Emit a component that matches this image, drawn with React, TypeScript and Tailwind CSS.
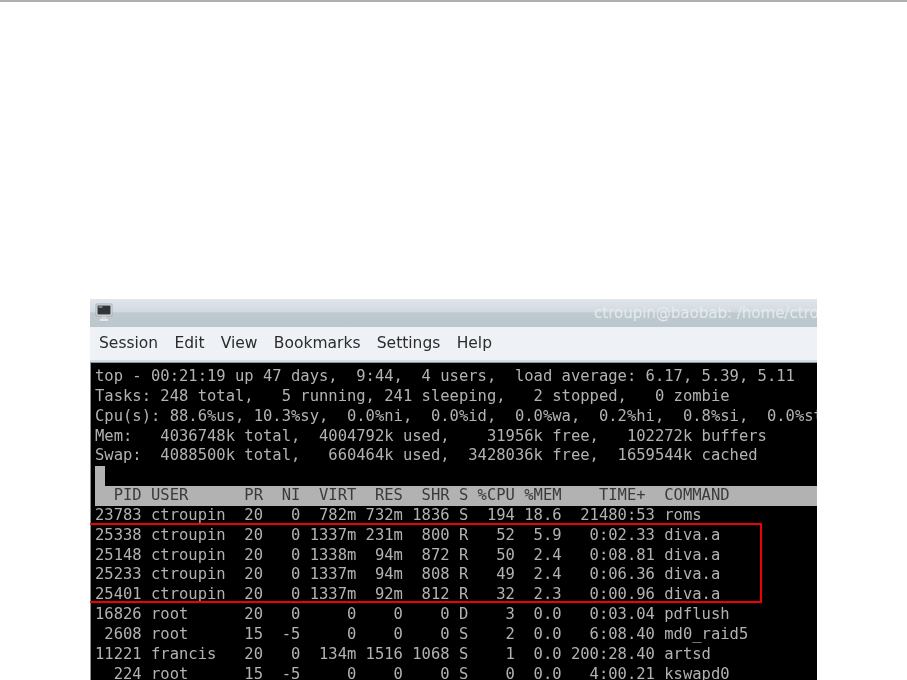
// Screenshot of a Konsole window running top, with a red box around the diva.a rows

const menuItems = ["Session", "Edit", "View", "Bookmarks", "Settings", "Help"]

const summaryLines = [
    "top - 00:21:19 up 47 days,  9:44,  4 users,  load average: 6.17, 5.39, 5.11",
    "Tasks: 248 total,   5 running, 241 sleeping,   2 stopped,   0 zombie",
    "Cpu(s): 88.6%us, 10.3%sy,  0.0%ni,  0.0%id,  0.0%wa,  0.2%hi,  0.8%si,  0.0%st",
    "Mem:   4036748k total,  4004792k used,    31956k free,   102272k buffers",
    "Swap:  4088500k total,   660464k used,  3428036k free,  1659544k cached",
]

const header = "  PID USER      PR  NI  VIRT  RES  SHR S %CPU %MEM    TIME+  COMMAND"

const processLines = [
    "23783 ctroupin  20   0  782m 732m 1836 S  194 18.6  21480:53 roms",
    "25338 ctroupin  20   0 1337m 231m  800 R   52  5.9   0:02.33 diva.a",
    "25148 ctroupin  20   0 1338m  94m  872 R   50  2.4   0:08.81 diva.a",
    "25233 ctroupin  20   0 1337m  94m  808 R   49  2.4   0:06.36 diva.a",
    "25401 ctroupin  20   0 1337m  92m  812 R   32  2.3   0:00.96 diva.a",
    "16826 root      20   0     0    0    0 D    3  0.0   0:03.04 pdflush",
    " 2608 root      15  -5     0    0    0 S    2  0.0   6:08.40 md0_raid5",
    "11221 francis   20   0  134m 1516 1068 S    1  0.0 200:28.40 artsd",
    "  224 root      15  -5     0    0    0 S    0  0.0   4:00.21 kswapd0",
]

function TerminalIcon() {
    return (
        <svg width="18" height="20" viewBox="0 0 18 20" className="ml-[5px]">
            <rect x="1" y="1" width="16" height="12" rx="1" fill="#e4e6e8" stroke="#8b9096" strokeWidth="0.6" />
            <rect x="2.5" y="2.5" width="13" height="9" fill="#30353a" />
            <rect x="3.5" y="3.5" width="4" height="1" fill="#c8ccd0" />
            <path d="M7 13.5h4l1 2.5H6z" fill="#d8dadc" />
            <rect x="4" y="16" width="10" height="2" rx="1" fill="#f4f4f4" stroke="#a8acb0" strokeWidth="0.4" />
        </svg>
    )
}

export default function App() {
    return (
        <div className="h-[680px] overflow-hidden border-t-2 border-[#b0b0b0] bg-white pt-[297px] pl-[90px]">
            <div className="relative w-[727px] overflow-hidden">
                <div className="blur-[0.45px]">
                    {/* Thanh tiêu đề */}
                    <div className="flex h-[28px] items-center justify-between overflow-hidden bg-[linear-gradient(#e0e6eb_0%,#d2dae0_45%,#bec9d0_50%,#bbc6cd_100%)]">
                        <TerminalIcon />
                        <span className="w-[223px] shrink-0 font-['DejaVu_Sans',sans-serif] text-[15px] whitespace-nowrap text-[#e6ebee]">
                            ctroupin@baobab: /home/ctroupin
                        </span>
                    </div>

                    {/* Menu */}
                    <div className="flex h-[35px] items-center gap-[16.3px] border-b-2 border-[#d5dbe2] bg-[#eef1f6] pl-[9px] font-['DejaVu_Sans',sans-serif] text-[15.5px] text-[#2c2c2c]">
                        {menuItems.map((item) => (
                            <span key={item}>{item}</span>
                        ))}
                    </div>

                    {/* Terminal */}
                    <div className="h-[320px] border-t border-l border-[#8a929a] bg-black pt-[4px] pl-[4px] font-['DejaVu_Sans_Mono',monospace] text-[15.5px] leading-[19.85px] whitespace-pre text-[#b2b2b2]">
                        {summaryLines.map((line) => (
                            <div key={line}>{line}</div>
                        ))}
                        <div className="h-[19.85px] w-[10px] bg-[#b2b2b2]" />
                        <div className="bg-[#b2b2b2] text-[#3a3a3a]">{header}</div>
                        {processLines.map((line) => (
                            <div key={line}>{line}</div>
                        ))}
                    </div>
                </div>

                {/* Khung đỏ đánh dấu diva.a */}
                <div className="absolute top-[224px] left-0 h-[80px] w-[672px] border-2 border-l-0 border-[#f00000]" />
            </div>
        </div>
    )
}
